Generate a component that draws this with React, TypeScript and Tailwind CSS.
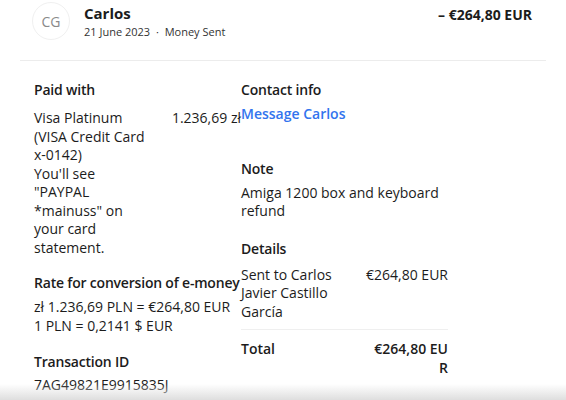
import React from "react";

const font = { fontFamily: '"Open Sans", "Noto Sans", sans-serif' };

function Heading({ children }: { children: React.ReactNode }) {
  return (
    <h3 className="whitespace-nowrap text-[14px] font-semibold leading-[18px] tracking-[-0.2px] text-[#1c1c1c]">
      {children}
    </h3>
  );
}

export default function App() {
  return (
    <div style={font} className="relative h-[400px] w-[566px] overflow-hidden bg-white text-[#1c1c1c]">
      {/* header */}
      <div className="mx-[20px] flex items-start justify-between border-b border-[#ececec] pb-[20px] pt-[2px]">
        <div className="flex items-center">
          <div className="ml-[12px] flex h-[38px] w-[38px] items-center justify-center rounded-full border border-[#f0f0f0] text-[14px] text-[#8a8a8a]">
            CG
          </div>
          <div className="ml-[14px]">
            <div className="text-[15px] font-bold leading-[20px]">Carlos</div>
            <div className="mt-[1px] text-[11px] leading-[16px] text-[#333]">
              21 June 2023 <span className="mx-[3px]">·</span> Money Sent
            </div>
          </div>
        </div>
        <div className="mr-[14px] mt-[3px] text-[14px] font-bold leading-[20px]">– €264,80 EUR</div>
      </div>

      {/* body */}
      <div className="ml-[34px] mt-[20px] grid w-[414px] grid-cols-2 text-[14px] leading-[18.5px]">
        <div>
          <Heading>Paid with</Heading>
          <div className="mt-[10px] flex justify-between">
            <div className="w-[118px]">
              Visa Platinum (VISA Credit Card x-0142)
              <br />
              You'll see "PAYPAL *mainuss" on your card statement.
            </div>
            <div className="whitespace-nowrap">1.236,69 zł</div>
          </div>

          <div className="mt-[17px]">
            <Heading>Rate for conversion of e-money</Heading>
            <div className="mt-[6px] whitespace-nowrap">zł 1.236,69 PLN = €264,80 EUR</div>
            <div>1 PLN = 0,2141 $ EUR</div>
          </div>

          <div className="mt-[18px]">
            <Heading>Transaction ID</Heading>
            <div className="mt-[5px]">7AG49821E9915835J</div>
          </div>
        </div>

        <div>
          <Heading>Contact info</Heading>
          <a className="mt-[6px] block font-semibold text-[#3274ee]" href="#">
            Message Carlos
          </a>

          <div className="mt-[36px]">
            <Heading>Note</Heading>
            <div className="mt-[6px] w-[200px]">Amiga 1200 box and keyboard refund</div>
          </div>

          <div className="mt-[19px]">
            <Heading>Details</Heading>
            <div className="mt-[8px] flex justify-between border-b border-[#efefef] pb-[8px]">
              <div className="w-[100px]">Sent to Carlos Javier Castillo García</div>
              <div className="whitespace-nowrap">€264,80 EUR</div>
            </div>
            <div className="mt-[10px] flex justify-between font-semibold">
              <div>Total</div>
              <div className="text-right">
                €264,80 EU
                <br />R
              </div>
            </div>
          </div>
        </div>
      </div>

      <div className="pointer-events-none absolute bottom-0 left-0 h-[16px] w-full bg-gradient-to-b from-transparent to-[#dedede]" />
    </div>
  );
}
